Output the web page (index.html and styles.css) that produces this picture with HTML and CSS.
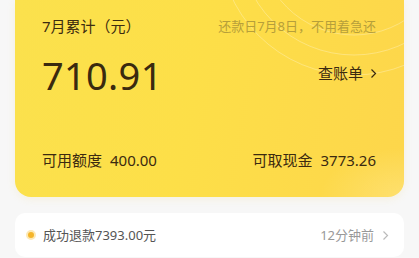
FILE: index.html
```html
<!DOCTYPE html>
<html lang="zh-CN">
<head>
<meta charset="utf-8">
<link rel="stylesheet" href="styles.css">
</head>
<body>
<div class="page">
  <section class="bill-card">
    <svg class="rings" width="200" height="120" viewBox="0 0 200 120" aria-hidden="true">
      <g fill="none" stroke="#ffffff" stroke-opacity="0.28" stroke-width="1">
        <circle cx="150" cy="-60" r="95"/>
        <circle cx="150" cy="-60" r="115"/>
        <circle cx="150" cy="-60" r="135"/>
      </g>
    </svg>
    <div class="row top-row">
      <span class="title">7月累计（元）</span>
      <span class="due">还款日7月8日，不用着急还</span>
    </div>
    <div class="row amount-row">
      <span class="amount">710.91</span>
      <span class="link">查账单 <svg class="chev" width="7" height="11" viewBox="0 0 7 11"><path d="M1.5 1.5l4 4-4 4" fill="none" stroke="#3b2a10" stroke-width="1.2"/></svg></span>
    </div>
    <div class="row stats-row">
      <span class="stat">可用额度<b>400.00</b></span>
      <span class="stat">可取现金<b>3773.26</b></span>
    </div>
  </section>
  <section class="notice">
    <span class="notice-left"><i class="dot"></i>成功退款7393.00元</span>
    <span class="notice-right">12分钟前 <svg class="chev" width="7" height="11" viewBox="0 0 7 11"><path d="M1.5 1.5l4 4-4 4" fill="none" stroke="#bbbbbb" stroke-width="1.2"/></svg></span>
  </section>
</div>
</body>
</html>
```
FILE: styles.css
```css
html, body {
  margin: 0;
  padding: 0;
  background: #f7f7f7;
  font-family: "Noto Sans", "Noto Sans CJK SC", sans-serif;
}
.page {
  width: 419px;
  padding: 0 15px;
  box-sizing: border-box;
}
.bill-card {
  position: relative;
  height: 197px;
  box-sizing: border-box;
  padding: 16px 28px 0 27px;
  border-radius: 0 0 16px 16px;
  background:
    radial-gradient(ellipse 120px 70px at 100% 100%, rgba(255, 232, 140, 0.55), rgba(255, 232, 140, 0) 70%),
    linear-gradient(100deg, #fbe14d 0%, #fddf48 45%, #fdd64b 100%);
  box-shadow: 0 2px 8px rgba(240, 200, 60, 0.12);
  overflow: hidden;
  color: #3b2a10;
}
.rings {
  position: absolute;
  top: 0;
  right: 0;
}
.row {
  position: relative;
  display: flex;
  justify-content: space-between;
  align-items: center;
}
.top-row {
  height: 20px;
}
.title {
  font-size: 15px;
  line-height: 20px;
  color: #3d2c10;
}
.due {
  font-size: 13px;
  line-height: 20px;
  color: #b69f3a;
}
.amount-row {
  margin-top: 14px;
  height: 50px;
}
.amount {
  font-size: 38px;
  font-family: "Noto Sans", sans-serif;
  letter-spacing: 0.3px;
  color: #3a2a0f;
  line-height: 50px;
}
.link {
  display: flex;
  align-items: center;
  gap: 7px;
  font-size: 15px;
  line-height: 20px;
  color: #3b2a10;
  margin-top: -4px;
  margin-right: -1px;
}
.stats-row {
  margin-top: 50px;
  height: 20px;
}
.stat {
  font-size: 15px;
  line-height: 20px;
  color: #3b2a10;
}
.stat b {
  font-weight: 400;
  margin-left: 8px;
}
.notice {
  margin-top: 16px;
  height: 44px;
  background: #ffffff;
  border-radius: 10px;
  display: flex;
  justify-content: space-between;
  align-items: center;
  padding: 0 15px 0 11px;
}
.notice-left {
  display: flex;
  align-items: center;
  font-size: 13px;
  line-height: 20px;
  color: #555555;
}
.dot {
  width: 6px;
  height: 6px;
  border-radius: 50%;
  background: #f5b52a;
  border: 2px solid #fde9b5;
  margin-right: 7px;
}
.notice-right {
  display: flex;
  align-items: center;
  gap: 8px;
  font-size: 13px;
  line-height: 20px;
  color: #999999;
}
```
